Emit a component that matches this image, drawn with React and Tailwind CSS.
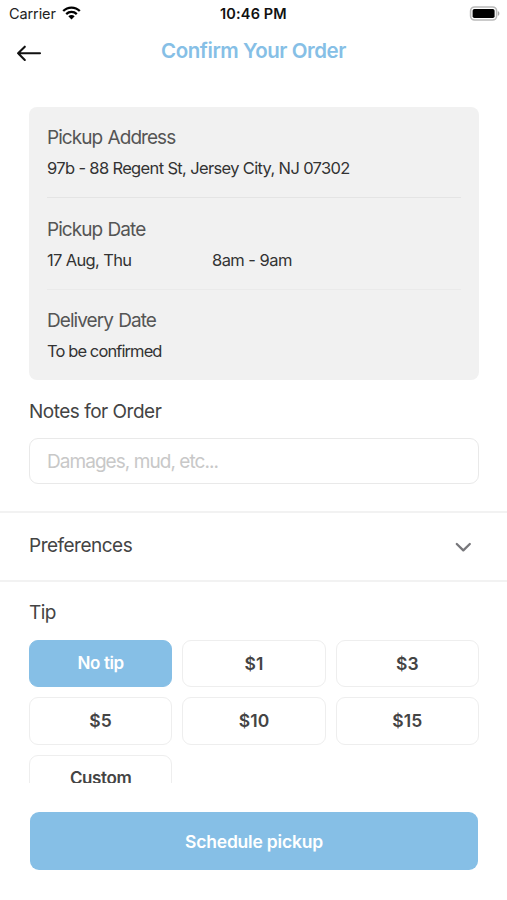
import { useState } from 'react';

const tips = ['No tip', '$1', '$3', '$5', '$10', '$15', 'Custom'];

const StatusBar = () => (
  <div className="grid h-7 grid-cols-3 items-center pl-[9px] pr-[7px] text-black">
    <div className="flex items-center gap-[6px]">
      <span className="text-[14.5px] tracking-[-0.1px] text-[#222]">Carrier</span>
      <svg className="-mt-[2px]" width="19" height="14" viewBox="0 0 19 14" fill="none" stroke="#000" strokeWidth="2.3">
        <path d="M1.2 5C5.8 0.4 13.2 0.4 17.8 5" />
        <path d="M4.2 8.1C7.2 5.2 11.8 5.2 14.8 8.1" />
        <path d="M9.5 13.5L6.3 10.3C8.1 8.6 10.9 8.6 12.7 10.3Z" fill="#000" stroke="none" />
      </svg>
    </div>
    <span className="pr-[2px] text-center text-[14.5px] font-semibold tracking-[0.15px] text-[#111]">10:46 PM</span>
    <svg className="-mt-[2px] justify-self-end" width="31" height="15" viewBox="0 0 31 15">
      <rect x="1.6" y="1" width="26" height="13" rx="4" fill="#fff" stroke="#b9b9b9" strokeWidth="1.6" />
      <rect x="3.6" y="3" width="22" height="9" rx="1.8" fill="#000" />
      <path d="M28.9 5.2C30.9 5.7 30.9 9.3 28.9 9.8Z" fill="#a5a5a5" />
    </svg>
  </div>
);

const Header = () => (
  <header className="grid h-[50px] grid-cols-[60px_1fr_60px] items-center">
    <button className="pb-[1px] pl-[15.5px]" aria-label="Back">
      <svg width="26" height="20" viewBox="0 0 26 20" fill="none" stroke="#111" strokeWidth="2.1" strokeLinecap="round" strokeLinejoin="round">
        <path d="M24 10.3H2.1M8.8 3.7L2.1 10.3L8.8 16.9" />
      </svg>
    </button>
    <h1 className="pb-[4px] text-center text-[20.5px] font-semibold tracking-[-0.45px] text-[#86bfe6]">
      Confirm Your Order
    </h1>
  </header>
);

const Label = ({ children }) => (
  <h2 className="text-[19px] leading-[26px] tracking-[-0.95px] text-[#555] [word-spacing:1px]">{children}</h2>
);

const SectionTitle = ({ children }) => (
  <h2 className="text-[19px] leading-[26px] tracking-[-0.5px] text-[#444]">{children}</h2>
);

const OrderSummary = () => (
  <section className="mr-7 ml-[29px] rounded-[8px] bg-[#f1f1f1] px-[18px] text-[16.5px] leading-6 tracking-[-0.65px] text-[#333]">
    <div className="flex h-[91px] flex-col gap-[5px] border-b border-[#e4e4e4] pt-[18px]">
      <Label>Pickup Address</Label>
      <p>97b - 88 Regent St, Jersey City, NJ 07302</p>
    </div>
    <div className="flex h-[92px] flex-col gap-[5px] border-b border-[#eaeaea] pt-[19px]">
      <Label>Pickup Date</Label>
      <div className="grid grid-cols-[165px_1fr]">
        <span>17 Aug, Thu</span>
        <span className="tracking-[-0.55px]">8am - 9am</span>
      </div>
    </div>
    <div className="flex h-[90px] flex-col gap-[5px] pt-[18px]">
      <Label>Delivery Date</Label>
      <p className="tracking-[-0.9px]">To be confirmed</p>
    </div>
  </section>
);

const App = () => {
  const [selectedTip, setSelectedTip] = useState('No tip');
  const [notes, setNotes] = useState('');

  return (
    <div className="flex h-[900px] w-[507px] flex-col overflow-hidden bg-white font-['Inter',sans-serif]">
      <StatusBar />
      <Header />

      <main className="min-h-0 flex-1 overflow-hidden pt-[29px]">
        <OrderSummary />

        {/* Notes */}
        <section className="mr-7 ml-[29px] pt-[19px]">
          <SectionTitle>Notes for Order</SectionTitle>
          <input
            className="mt-[13px] h-[46px] w-full rounded-[9px] border-[1.5px] border-[#e9e9e9] px-[17px] text-[19px] tracking-[-0.95px] text-[#444] outline-none placeholder:text-[#c8c8c8]"
            placeholder="Damages, mud, etc..."
            value={notes}
            onChange={(e) => setNotes(e.target.value)}
          />
        </section>

        {/* Preferences */}
        <section className="mt-[27px] flex h-[71px] items-center justify-between border-y-2 border-[#f2f2f2] pr-[35px] pb-[2px] pl-[29px]">
          <SectionTitle>Preferences</SectionTitle>
          <svg className="mt-[2px]" width="18" height="12" viewBox="0 0 18 12" fill="none" stroke="#77777b" strokeWidth="2.3" strokeLinecap="round" strokeLinejoin="round">
            <path d="M2.8 3L9.3 9.4L15.8 3" />
          </svg>
        </section>

        {/* Tip */}
        <section className="mr-7 ml-[29px] pt-[18px]">
          <SectionTitle>Tip</SectionTitle>
          <div className="mt-[13.5px] grid auto-rows-[47.5px] grid-cols-3 gap-[10px]">
            {tips.map((tip) => (
              <button
                key={tip}
                onClick={() => setSelectedTip(tip)}
                className={`rounded-[9px] border-[1.5px] pt-[1px] font-semibold ${
                  tip.startsWith('$') ? 'text-[17.5px] tracking-[0.1px]' : 'text-[17px] tracking-[-0.4px]'
                } ${
                  tip === selectedTip
                    ? 'border-[#86bfe6] bg-[#86bfe6] text-white'
                    : 'border-[#eeeeee] bg-white text-[#444]'
                }`}
              >
                {tip}
              </button>
            ))}
          </div>
        </section>
      </main>

      <footer className="h-[117px] bg-white pt-[29px] pr-[29px] pl-[30px]">
        <button className="h-[58px] w-full rounded-[9px] bg-[#86bfe6] pt-[2px] text-[17.5px] font-semibold tracking-[-0.2px] text-white">
          Schedule pickup
        </button>
      </footer>
    </div>
  );
};

export default App;
